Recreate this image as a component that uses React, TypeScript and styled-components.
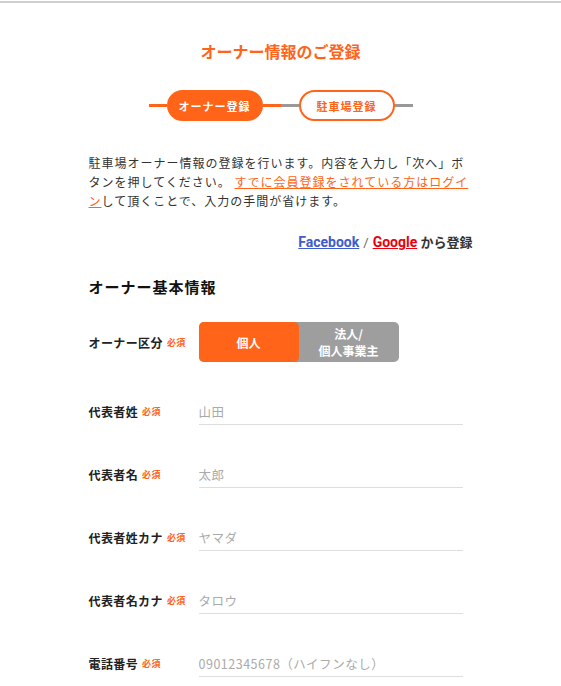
import styled, { createGlobalStyle } from 'styled-components';

const ORANGE = '#ff6418';

const GlobalStyle = createGlobalStyle`
  html, body {
    margin: 0;
    padding: 0;
    background: #fff;
  }
  body {
    font-family: "Noto Sans CJK JP", "Noto Sans", sans-serif;
    color: #333;
  }
  * { box-sizing: border-box; }
`;

const Page = styled.div`
  padding-top: 1px;
`;

const TopRule = styled.div`
  height: 2px;
  background: #cfcfcf;
`;

const Container = styled.div`
  width: 384px;
  margin: 0 auto;
  padding-top: 37px;
  padding-bottom: 40px;
`;

const Title = styled.h1`
  margin: 0;
  font-size: 16px;
  line-height: 22px;
  font-weight: 700;
  color: ${ORANGE};
  text-align: center;
`;

const Stepper = styled.div`
  display: flex;
  justify-content: center;
  margin-top: 28px;
`;

const Step = styled.div`
  display: flex;
  align-items: center;
  width: 132px;
`;

const StepLine = styled.div<{ $active: boolean }>`
  flex: 1;
  height: 3px;
  background: ${({ $active }) => ($active ? ORANGE : '#999')};
`;

const StepPill = styled.div<{ $active: boolean }>`
  width: 96px;
  height: 31px;
  border-radius: 16px;
  border: 2px solid ${ORANGE};
  background: ${({ $active }) => ($active ? ORANGE : '#fff')};
  color: ${({ $active }) => ($active ? '#fff' : ORANGE)};
  font-size: 11px;
  font-weight: 700;
  letter-spacing: 1px;
  display: flex;
  align-items: center;
  justify-content: center;
`;

const Lead = styled.p`
  margin: 32px 0 0;
  font-size: 12px;
  line-height: 19px;
  letter-spacing: 1px;
  color: #333;
`;

const LeadLink = styled.a`
  color: ${ORANGE};
  text-decoration: underline;
`;

const Social = styled.div`
  margin-top: 23px;
  text-align: right;
  font-family: Roboto, "Noto Sans CJK JP", sans-serif;
  font-size: 13px;
  line-height: 18px;
  font-weight: 700;
  color: #333;
`;

const SocialLink = styled.a<{ $color: string }>`
  font-size: 14px;
  color: ${({ $color }) => $color};
  text-decoration: underline;
`;

const Slash = styled.span`
  font-weight: 400;
  color: #666;
  margin: 0 4px;
`;

const SectionTitle = styled.h2`
  margin: 24px 0 0;
  font-size: 15px;
  line-height: 22px;
  font-weight: 700;
  letter-spacing: 1px;
  color: #111;
`;

const Form = styled.div`
  margin-top: 24px;
  display: flex;
  flex-direction: column;
  gap: 36px;
`;

const Row = styled.div`
  display: flex;
  align-items: center;
`;

const Label = styled.div`
  width: 110px;
  flex-shrink: 0;
  display: flex;
  align-items: center;
  font-size: 12px;
  font-weight: 700;
  letter-spacing: 0.4px;
  color: #222;
`;

const Required = styled.span`
  margin-left: 4px;
  font-size: 9px;
  font-weight: 700;
  color: ${ORANGE};
`;

const Toggle = styled.div`
  display: flex;
  width: 200px;
  height: 40px;
  border-radius: 5px;
  background: #9e9e9e;
`;

const ToggleOption = styled.div<{ $active: boolean }>`
  flex: 1;
  display: flex;
  align-items: center;
  justify-content: center;
  text-align: center;
  border-radius: 5px;
  background: ${({ $active }) => ($active ? ORANGE : 'transparent')};
  color: #fff;
  font-size: 12px;
  line-height: 17px;
  font-weight: 700;
`;

const Input = styled.input`
  width: 264px;
  height: 27px;
  padding: 0;
  border: none;
  border-bottom: 1px solid #ddd;
  outline: none;
  font-family: inherit;
  font-size: 12.5px;
  color: #333;
  background: transparent;

  &::placeholder {
    color: #aaa;
    letter-spacing: 0.5px;
  }
`;

const fields = [
  { label: '代表者姓', placeholder: '山田' },
  { label: '代表者名', placeholder: '太郎' },
  { label: '代表者姓カナ', placeholder: 'ヤマダ' },
  { label: '代表者名カナ', placeholder: 'タロウ' },
  { label: '電話番号', placeholder: '09012345678（ハイフンなし）' },
];

export default function App() {
  return (
    <Page>
      <GlobalStyle />
      <TopRule />
      <Container>
        <Title>オーナー情報のご登録</Title>

        <Stepper>
          <Step>
            <StepLine $active />
            <StepPill $active>オーナー登録</StepPill>
            <StepLine $active />
          </Step>
          <Step>
            <StepLine $active={false} />
            <StepPill $active={false}>駐車場登録</StepPill>
            <StepLine $active={false} />
          </Step>
        </Stepper>

        <Lead>
          駐車場オーナー情報の登録を行います。内容を入力し「次へ」ボタンを押してください。{' '}
          <LeadLink href="#">すでに会員登録をされている方はログイン</LeadLink>
          して頂くことで、入力の手間が省けます。
        </Lead>

        <Social>
          <SocialLink href="#" $color="#3f5bcc">Facebook</SocialLink>
          <Slash>/</Slash>
          <SocialLink href="#" $color="#e8000b">Google</SocialLink> から登録
        </Social>

        <SectionTitle>オーナー基本情報</SectionTitle>

        <Form>
          <Row>
            <Label>
              オーナー区分<Required>必須</Required>
            </Label>
            <Toggle>
              <ToggleOption $active>個人</ToggleOption>
              <ToggleOption $active={false}>
                法人/
                <br />
                個人事業主
              </ToggleOption>
            </Toggle>
          </Row>
          {fields.map((f) => (
            <Row key={f.label}>
              <Label>
                {f.label}
                <Required>必須</Required>
              </Label>
              <Input placeholder={f.placeholder} />
            </Row>
          ))}
        </Form>
      </Container>
    </Page>
  );
}
